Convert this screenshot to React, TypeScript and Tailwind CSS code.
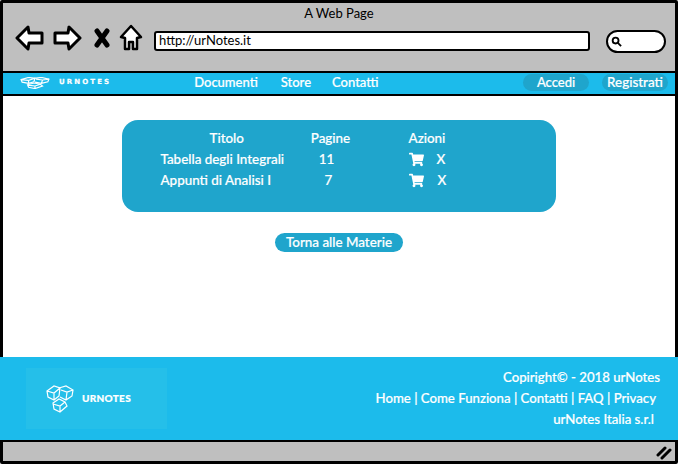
/*
 * urNotes wireframe: browser chrome, nav bar, saved documents table, footer.
 */
import { FaShoppingCart } from "react-icons/fa";

const FONT = "font-['Lato','Noto_Sans',sans-serif]";
const HEAVY = "[-webkit-text-stroke:0.2px_white]";

// three cubes, squashed in the nav by preserveAspectRatio
function Logo({ className }: { className?: string }) {
  return (
    <svg viewBox="0 0 28 28" preserveAspectRatio="none" fill="none" stroke="currentColor" strokeWidth="1.2" className={className}>
      <path vectorEffect="non-scaling-stroke" d="M1 6 L8 1 L14 3 L13 11 L8 15 L2 12 Z M1 6 L8 8 L14 3 M8 8 L8 15" />
      <path vectorEffect="non-scaling-stroke" d="M13 3 L20 1 L27 5 L26 11 L20 15 L14 12 M15 5 L21 7 L27 5 M21 7 L20 15" />
      <path vectorEffect="non-scaling-stroke" d="M7 18 L13 14 L19 17 L21 21 L14 27 L8 24 Z M7 19 L14 21 L19 17 M14 21 L14 27" />
    </svg>
  );
}

function Actions({ xClass }: { xClass: string }) {
  return (
    <span className="ml-[43px] flex items-center">
      <FaShoppingCart size={15} />
      <span className={xClass}>X</span>
    </span>
  );
}

function Row({ title, pages, pagesClass, xClass }: { title: string; pages: string; pagesClass: string; xClass: string }) {
  return (
    <div className="flex h-[21px] items-center">
      <span className="w-[174px] pl-[39px] whitespace-nowrap">{title}</span>
      <span className={`w-[70px] text-center ${pagesClass}`}>{pages}</span>
      <Actions xClass={xClass} />
    </div>
  );
}

export default function App() {
  return (
    <div className={`flex h-[467px] w-[678px] flex-col overflow-hidden bg-white text-white ${FONT}`}>
      <div className="flex h-[464px] flex-col rounded-[2px] border-[3px] border-black bg-[#bfbfbf]">
        {/* browser chrome */}
        <div className="flex h-[68px] shrink-0 flex-col text-black">
          <div className="pt-[2px] text-center text-[13px] leading-[17px]">A Web Page</div>
          <div className="mt-[1px] flex items-center pl-[12px]">
            <svg viewBox="0 0 30 28" className="h-[28px] w-[30px]" fill="white" stroke="black" strokeWidth="3" strokeLinejoin="round">
              <path d="M2 14 L13 3 L14 9 L27 9 L27 19 L14 19 L13 25 Z" />
            </svg>
            <svg viewBox="0 0 30 28" className="ml-[7px] h-[28px] w-[30px]" fill="white" stroke="black" strokeWidth="3" strokeLinejoin="round">
              <path d="M28 14 L17 3 L16 9 L3 9 L3 19 L16 19 L17 25 Z" />
            </svg>
            <svg viewBox="0 0 18 20" className="ml-[11px] h-[20px] w-[18px]" stroke="black" strokeWidth="5" strokeLinecap="round">
              <path d="M4 3 L14 17 M14 3 L4 17" />
            </svg>
            <svg viewBox="0 0 24 28" className="ml-[8px] h-[28px] w-[24px]" fill="white" stroke="black" strokeWidth="2.5" strokeLinejoin="round">
              <path d="M12 2 L22 13 L18 14 L18 25 L14 25 L14 18 L10 18 L10 25 L6 25 L6 14 L2 13 Z" />
            </svg>
            <div className="mt-[6px] ml-[11px] flex h-[20px] w-[436px] items-center rounded-[3px] border-[2.5px] border-black bg-white pl-[3px] text-[13px]">
              http://urNotes.it
            </div>
            <div className="mt-[7px] ml-[16px] flex h-[23px] w-[60px] items-center rounded-full border-[2.5px] border-black bg-white pl-[3px]">
              <svg viewBox="0 0 12 12" className="h-[11px] w-[11px]" fill="none" stroke="black" strokeWidth="2">
                <circle cx="5" cy="5" r="3.2" />
                <path d="M7.5 7.5 L11 11" />
              </svg>
            </div>
          </div>
        </div>

        {/* nav */}
        <nav className={`flex h-[25px] shrink-0 items-center border-y-[2px] border-black bg-[#1cbbeb] pb-[2px] text-[13px] font-medium ${HEAVY}`}>
          <Logo className="ml-[17px] h-[12px] w-[30px]" />
          <span className="ml-[9px] font-['DejaVu_Sans',sans-serif] text-[7px] font-bold tracking-[2.1px]">URNOTES</span>
          <span className="ml-[83px]">Documenti</span>
          <span className="ml-[23px]">Store</span>
          <span className="ml-[21px]">Contatti</span>
          <span className="ml-auto flex h-[17px] w-[66px] items-center justify-center rounded-full bg-[#1fa5cc]">Accedi</span>
          <span className="mr-[7px] ml-[13px] flex h-[17px] w-[66px] items-center justify-center rounded-full bg-[#1fa5cc] text-[13.4px]">Registrati</span>
        </nav>

        {/* content */}
        <main className={`flex min-h-0 flex-1 flex-col items-center bg-white pt-[24px] text-[13.4px] font-medium ${HEAVY}`}>
          <div className="ml-[-1px] flex h-[92px] w-[434px] flex-col rounded-[16px] bg-[#1fa5cc] pt-[8px]">
            <div className="flex h-[21px] items-center">
              <span className="w-[174px] pl-[88px]">Titolo</span>
              <span className="w-[70px] text-center">Pagine</span>
              <span className="ml-[43px]">Azioni</span>
            </div>
            <Row title="Tabella degli Integrali" pages="11" pagesClass="pr-[8px]" xClass="ml-[13px]" />
            <Row title="Appunti di Analisi I" pages="7" pagesClass="pr-[4px]" xClass="ml-[14px]" />
          </div>
          <span className="mt-[21px] flex h-[19px] w-[128px] items-center justify-center rounded-full bg-[#1fa5cc]">
            Torna alle Materie
          </span>
        </main>

        {/* footer */}
        <footer className={`mx-[-3px] flex h-[83px] shrink-0 items-center bg-[#1cbbeb] text-[13.2px] font-medium ${HEAVY}`}>
          <div className="ml-[26px] flex h-[61px] w-[141px] items-center bg-[#25bfe9] pl-[20px]">
            <Logo className="h-[28px] w-[28px]" />
            <span className="ml-[8px] text-[10px] font-black tracking-[0.3px]">URNOTES</span>
          </div>
          <div className="mr-[18px] ml-auto flex flex-col items-end leading-[21px]">
            <span>Copiright© - 2018 urNotes</span>
            <span className="mr-[4px]">Home | Come Funziona | Contatti | FAQ | Privacy</span>
            <span className="mr-[6px]">urNotes Italia s.r.l</span>
          </div>
        </footer>

        {/* status bar */}
        <div className="flex h-[21px] shrink-0 items-center justify-end border-t-[2px] border-black pt-[2px] pr-[3px]">
          <svg viewBox="0 0 16 14" className="h-[14px] w-[16px]" stroke="black" strokeWidth="3" strokeLinecap="round">
            <path d="M2 9 L9 2 M6 12 L14 4" />
          </svg>
        </div>
      </div>
    </div>
  );
}
